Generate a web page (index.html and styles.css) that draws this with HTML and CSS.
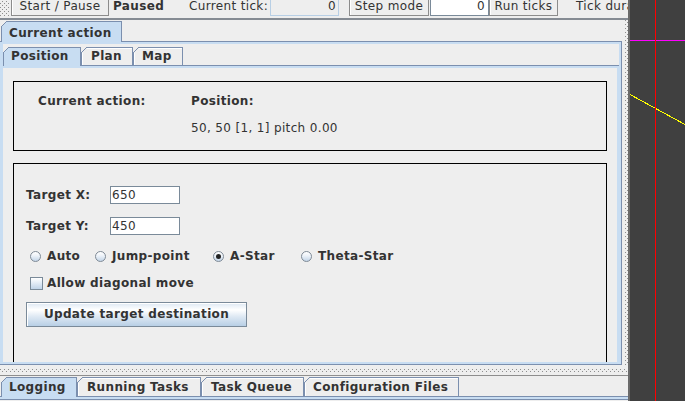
FILE: index.html
```html
<!DOCTYPE html>
<html>
<head>
<meta charset="utf-8">
<title>Agent</title>
<link rel="stylesheet" href="styles.css">
</head>
<body>
<div class="app">
  <div class="left">
    <div class="toolbar">
      <div class="grip bumps"></div>
      <div class="tbtn w-start">Start / Pause</div>
      <div class="tlabel bold w-paused">Paused</div>
      <div class="tlabel w-tick">Current tick:</div>
      <div class="tfield ro w-tickf">0</div>
      <div class="tbtn w-step">Step mode</div>
      <div class="tfield w-stepf">0</div>
      <div class="tbtn w-run">Run ticks</div>
      <div class="tlabel w-dur">Tick duration:</div>
    </div>
    <div class="tb-line"></div>
    <div class="upper">
      <div class="outer">
        <div class="tabstrip outer-strip">
          <div class="tab sel t-current">Current action</div>
        </div>
        <div class="outer-content">
          <div class="inner">
            <div class="tabstrip inner-strip">
              <div class="tab sel t-position">Position</div>
              <div class="tab t-plan">Plan</div>
              <div class="tab t-map">Map</div>
            </div>
            <div class="inner-content">
              <div class="panel">
                <div class="box info">
                  <div class="bold">Current action:</div>
                  <div class="bold">Position:</div>
                  <div></div>
                  <div>50, 50 [1, 1] pitch 0.00</div>
                </div>
                <div class="box target">
                  <div class="frow">
                    <div class="flabel">Target X:</div>
                    <div class="field">650</div>
                  </div>
                  <div class="frow row-y">
                    <div class="flabel">Target Y:</div>
                    <div class="field">450</div>
                  </div>
                  <div class="rrow">
                    <div class="radio r-auto"><span class="rdot"></span>Auto</div>
                    <div class="radio r-jump"><span class="rdot"></span>Jump-point</div>
                    <div class="radio r-astar"><span class="rdot on"></span>A-Star</div>
                    <div class="radio"><span class="rdot"></span>Theta-Star</div>
                  </div>
                  <div class="crow"><span class="cbox"></span>Allow diagonal move</div>
                  <div class="btn">Update target destination</div>
                </div>
              </div>
            </div>
          </div>
        </div>
      </div>
      <div class="vsplit"><div class="vdots bumps"></div></div>
    </div>
    <div class="hsplit"><div class="hdots bumps"></div></div>
    <div class="bottom">
      <div class="tabstrip bottom-strip">
        <div class="tab sel t-log">Logging</div>
        <div class="tab t-run">Running Tasks</div>
        <div class="tab t-queue">Task Queue</div>
        <div class="tab t-conf">Configuration Files</div>
      </div>
      <div class="bottom-content"></div>
    </div>
  </div>
  <div class="vline"></div>
  <div class="canvas">
    <svg class="lines" width="55" height="401" viewBox="0 0 55 401">
      <rect x="0" y="40" width="55" height="1" fill="#ff00ff"/>
      <line x1="0" y1="94.5" x2="55" y2="124.5" stroke="#ffff00" stroke-width="1" shape-rendering="crispEdges"/>
    </svg>
    <div class="redline"></div>
  </div>
</div>
</body>
</html>
```

FILE: styles.css
```css
* { box-sizing: border-box; }
html, body { margin: 0; padding: 0; }
body {
  width: 685px;
  height: 401px;
  overflow: hidden;
  background: #eeeeee;
  font-family: "DejaVu Sans", "Liberation Sans", sans-serif;
  font-size: 12px;
  letter-spacing: 0.35px;
  color: #333333;
}
.bold { font-weight: bold; }

.app { display: flex; width: 685px; height: 401px; }
.left {
  width: 628px;
  flex: none;
  display: flex;
  flex-direction: column;
  background: #eeeeee;
  overflow: hidden;
}
.vline { width: 2px; flex: none; background: #6a6a6a; }
.canvas {
  width: 55px;
  height: 401px;
  flex: none;
  overflow: hidden;
  background: #404040;
  display: grid;
  grid-template: 401px / 55px;
}
.lines { display: block; grid-area: 1 / 1; }
.redline {
  grid-area: 1 / 1;
  margin-left: 25px;
  width: 1px;
  height: 401px;
  background: #ff0000;
}

.bumps {
  background-color: #eeeeee;
  background-image:
    conic-gradient(from 270deg at 1px 1px, #8e8e8e 90deg, transparent 0),
    conic-gradient(from 270deg at 1px 1px, #8e8e8e 90deg, transparent 0);
  background-size: 4px 4px, 4px 4px;
  background-position: 0 0, 2px 2px;
}

/* toolbar */
.toolbar {
  height: 18px;
  flex: none;
  display: flex;
  align-items: flex-end;
  padding-bottom: 2px;
  overflow: hidden;
  white-space: nowrap;
}
.grip { width: 10px; height: 17px; margin-right: 1px; flex: none; }
.tbtn {
  flex: none;
  height: 19px;
  line-height: 16px;
  border: 1px solid #8c8c8c;
  box-shadow: inset 1px 1px 0 #ffffff;
  text-align: center;
  background: #eeeeee;
}
.tlabel { flex: none; height: 19px; line-height: 18px; }
.tfield {
  flex: none;
  height: 19px;
  line-height: 16px;
  border: 1px solid #7a8a99;
  background: #ffffff;
  text-align: right;
  padding-right: 3px;
}
.tfield.ro { background: #eeeeee; border-color: #b8cfe5; padding-right: 2px; }
.w-start { width: 98px; }
.w-paused { width: 80px; padding-left: 4px; }
.w-tick { width: 81px; }
.w-tickf { width: 69px; }
.w-step { width: 80px; margin-left: 10px; }
.w-stepf { width: 59px; margin-left: 1px; }
.w-run { width: 69px; }
.w-dur { margin-left: 18px; }

.tb-line { height: 2px; flex: none; background: #858b93; }

/* tabbed panes */
.upper { height: 345px; flex: none; display: flex; }
.outer { width: 622px; flex: none; display: flex; flex-direction: column; }
.tabstrip { display: flex; align-items: flex-end; flex: none; }
.tab {
  --tab-bg: #eeeeee;
  position: relative;
  flex: none;
  border: 1px solid #7b8fae;
  border-bottom: none;
  background: var(--tab-bg);
  box-shadow: inset 1px 1px 0 #ffffff;
  font-weight: bold;
  white-space: nowrap;
}
.tab::before {
  content: "";
  position: absolute;
  top: -1px;
  left: -1px;
  width: 6px;
  height: 6px;
  background: linear-gradient(to bottom right,
    #eeeeee 0, #eeeeee calc(50% - 0.7px),
    #7b8fae calc(50% - 0.7px), #7b8fae calc(50% + 0.7px),
    var(--tab-bg) calc(50% + 0.7px));
}
.tab.sel {
  --tab-bg: #c8ddf2;
  box-shadow: none;
  margin-bottom: -1px;
  z-index: 1;
}

.outer-strip { height: 21px; }
.outer-strip .tab { height: 21px; padding-top: 3px; line-height: 16px; }
.t-current { margin-left: 1px; width: 121px; padding-left: 7px; }

.outer-content {
  flex: 1;
  min-height: 0;
  display: flex;
  flex-direction: column;
  background: #c8ddf2;
  border: 1px solid #7b8fae;
  border-left: none;
  padding: 2px 2px 2px 3px;
}
.inner { flex: 1; min-height: 0; display: flex; flex-direction: column; background: #eeeeee; }
.inner-strip { height: 21px; }
.inner-strip .tab { height: 18px; line-height: 17px; }
.inner-strip .tab.sel { height: 19px; }
.t-position { width: 78px; padding-left: 7px; }
.t-plan { width: 52px; padding-left: 9px; }
.t-map { width: 50px; padding-left: 8px; }

.inner-content {
  flex: 1;
  min-height: 0;
  display: flex;
  background: #c8ddf2;
  border-top: 1px solid #7b8fae;
  padding: 2px 2px 0 0;
}
.panel {
  flex: 1;
  min-width: 0;
  background: #eeeeee;
  overflow: hidden;
  padding: 13px 10px 0 10px;
}

.box { border: 1px solid #000000; }
.info {
  height: 70px;
  display: grid;
  grid-template-columns: 153px auto;
  row-gap: 12px;
  align-content: start;
  padding: 12px 0 0 24px;
  line-height: 15px;
}
.target {
  margin-top: 12px;
  height: 260px;
  padding: 22px 0 0 12px;
  display: flex;
  flex-direction: column;
  align-items: flex-start;
}
.frow { display: flex; align-items: center; height: 18px; }
.row-y { margin-top: 13px; }
.flabel { width: 84px; font-weight: bold; line-height: 18px; }
.field {
  width: 70px;
  height: 18px;
  border: 1px solid #7a8a99;
  background: #ffffff;
  line-height: 16px;
  padding-left: 1px;
}

.rrow { display: flex; height: 18px; margin-top: 12px; }
.radio { display: flex; align-items: center; font-weight: bold; line-height: 18px; flex: none; }
.r-auto { width: 65px; }
.r-jump { width: 118px; }
.r-astar { width: 88px; }
.rdot {
  width: 11px;
  height: 11px;
  margin: 0 6px 0 4px;
  border-radius: 50%;
  border: 1px solid #7f8a96;
  background: linear-gradient(#ffffff 0%, #eef3f9 40%, #c3d5e8 100%);
  display: flex;
  align-items: center;
  justify-content: center;
}
.rdot.on::after {
  content: "";
  width: 5px;
  height: 5px;
  border-radius: 50%;
  background: #222222;
}

.crow {
  display: flex;
  align-items: center;
  height: 18px;
  margin-top: 9px;
  font-weight: bold;
  line-height: 18px;
}
.cbox {
  width: 13px;
  height: 13px;
  margin: 0 4px 0 4px;
  border: 1px solid #7a8a99;
  background: linear-gradient(#ffffff 0%, #e6eef7 40%, #bfd3e8 100%);
}

.btn {
  margin-top: 10px;
  width: 221px;
  height: 25px;
  border: 1px solid #7a8a99;
  box-shadow: inset 1px 1px 0 #ffffff;
  background: linear-gradient(#dde8f3 0%, #ffffff 30%, #dde8f3 60%, #b8cfe5 100%);
  font-weight: bold;
  line-height: 23px;
  text-align: center;
}

.vsplit { width: 6px; flex: none; display: flex; justify-content: flex-end; }
.vdots { width: 3px; }

.hsplit {
  height: 11px;
  flex: none;
  padding-top: 4px;
  border-bottom: 1px solid #8e8e8e;
}
.hdots { height: 3px; }

.bottom { height: 25px; flex: none; display: flex; flex-direction: column; }
.bottom-strip { height: 20px; }
.bottom-strip .tab { height: 19px; padding-top: 1px; line-height: 17px; }
.bottom-strip .tab.sel { height: 20px; }
.t-log { margin-left: 1px; width: 76px; padding-left: 7px; }
.t-run { width: 124px; padding-left: 9px; }
.t-queue { width: 103px; padding-left: 9px; }
.t-conf { width: 155px; padding-left: 8px; }
.bottom-content {
  flex: 1;
  border-top: 1px solid #7b8fae;
  background: linear-gradient(#c8ddf2 0, #c8ddf2 2px, #7b8fae 2px, #7b8fae 3px, #eeeeee 3px);
}
```
